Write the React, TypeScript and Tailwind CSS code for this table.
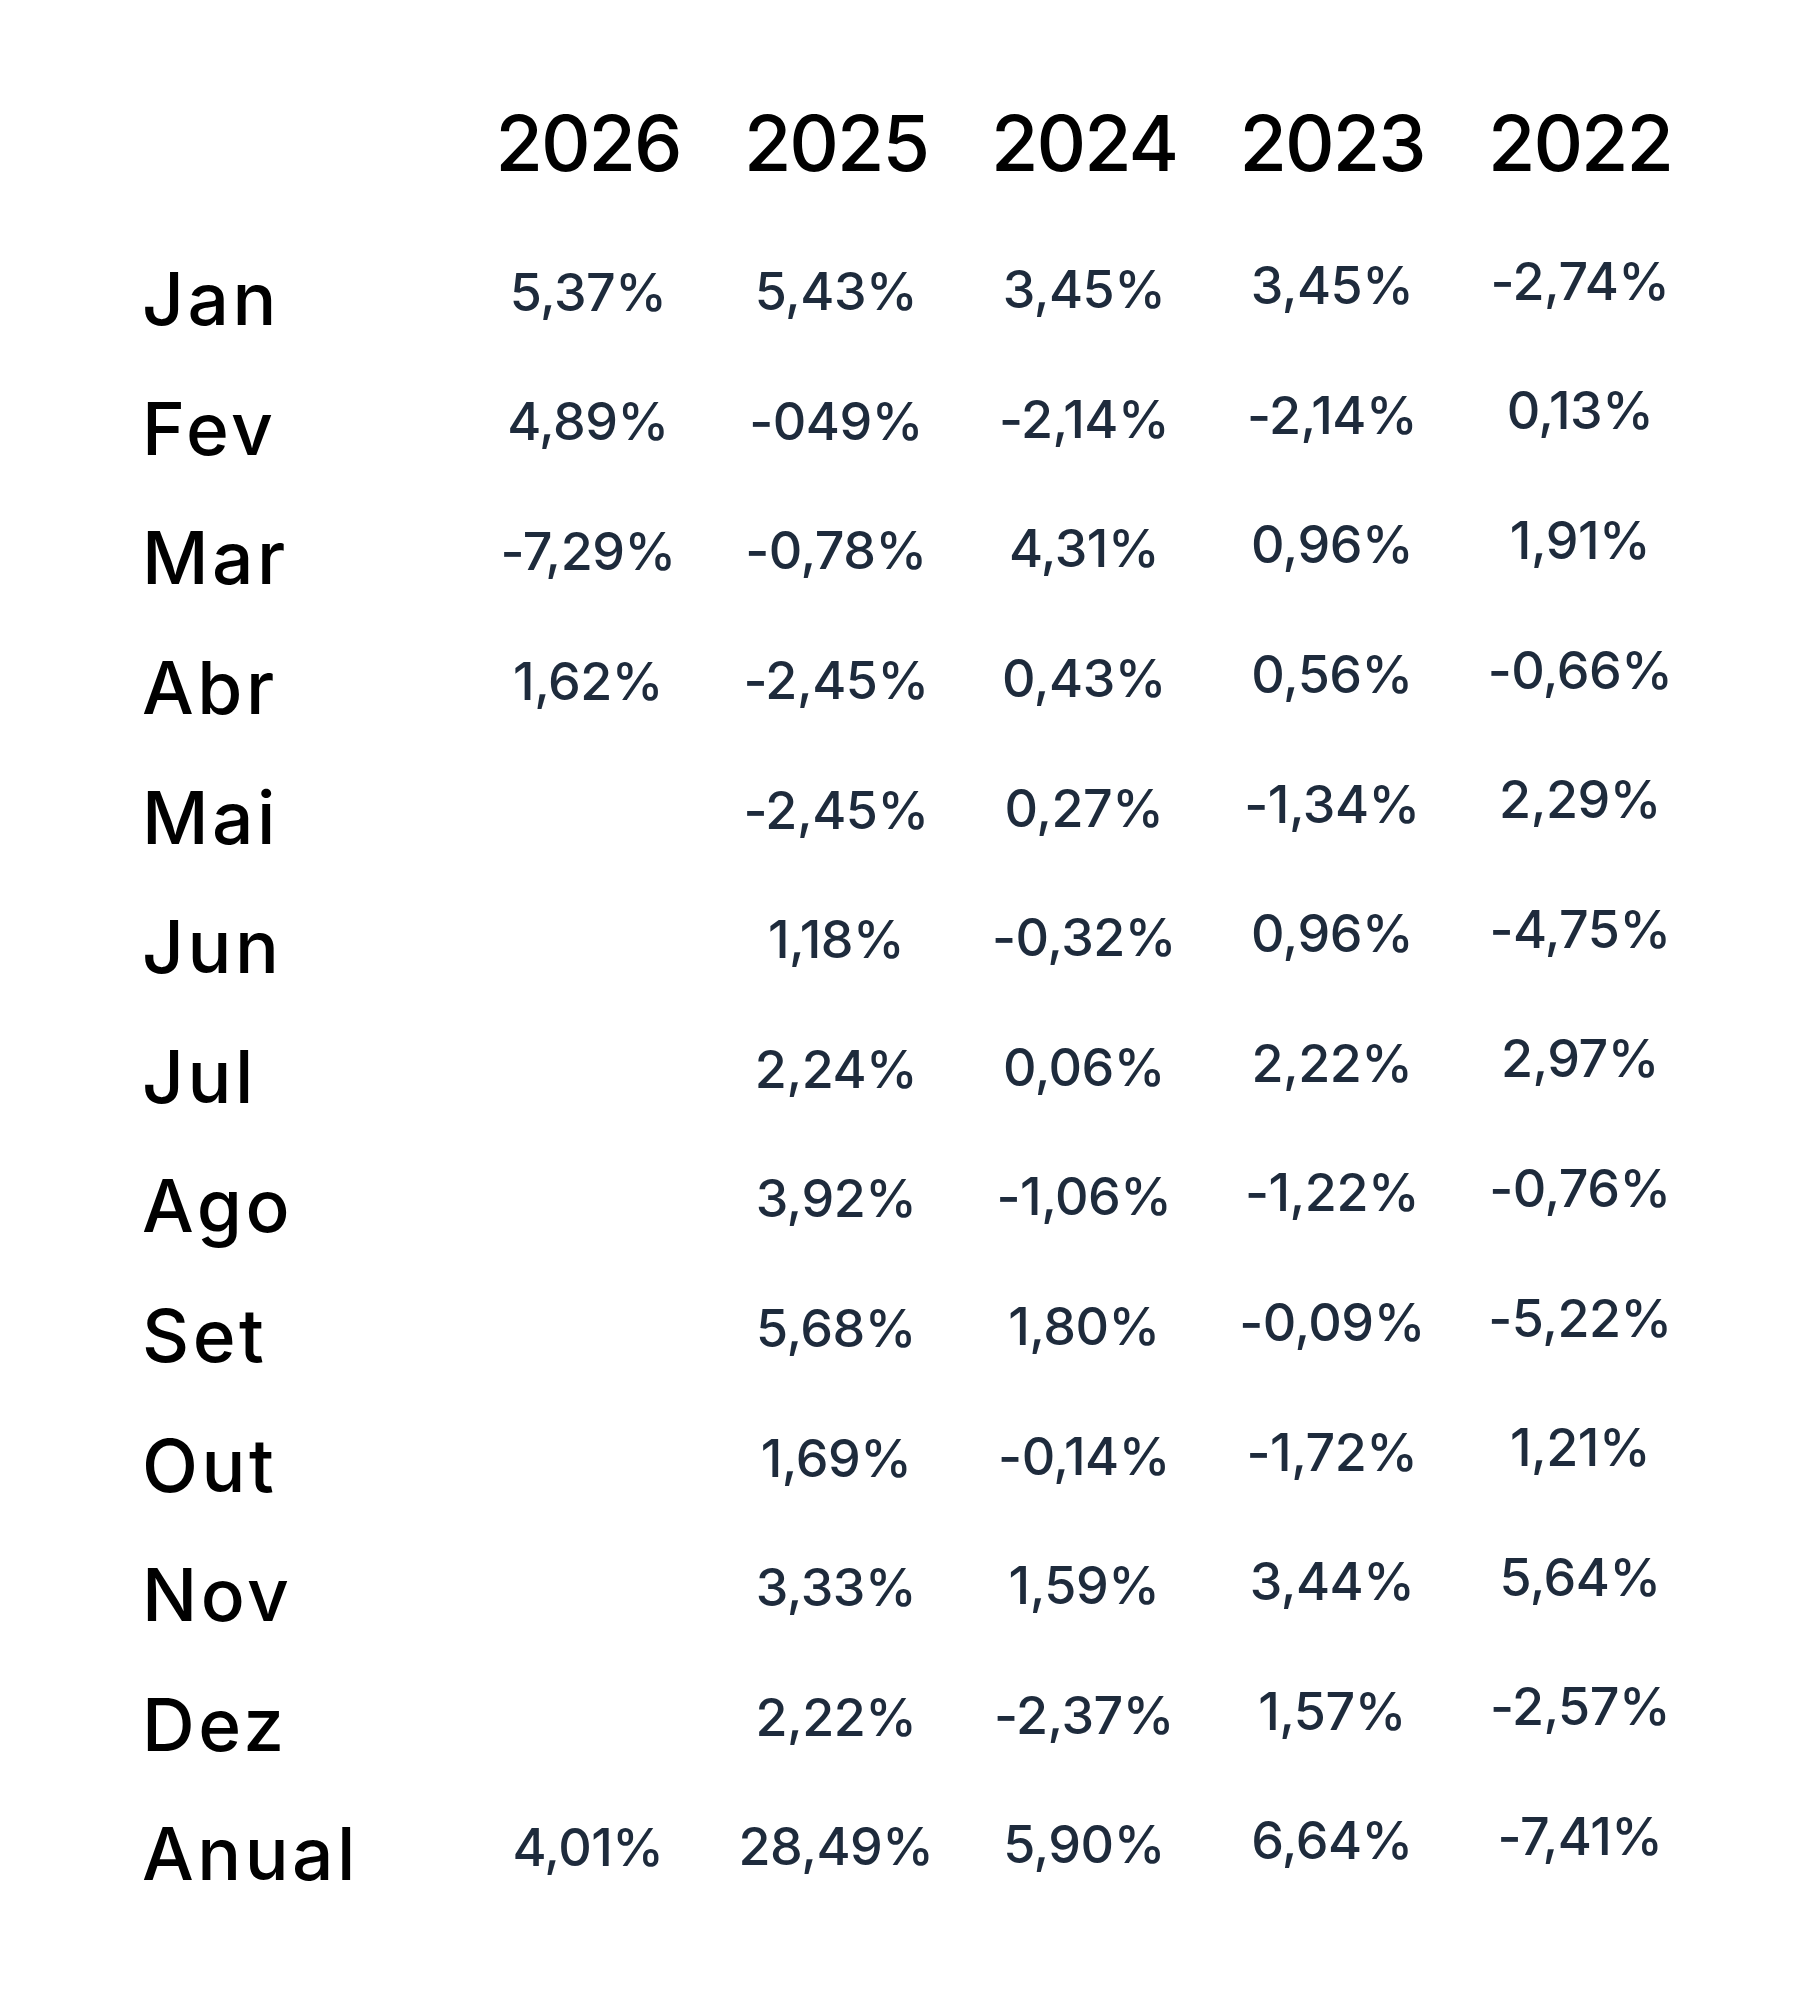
import React from "react";

const years = ["2026", "2025", "2024", "2023", "2022"];
const months = ["Jan", "Fev", "Mar", "Abr", "Mai", "Jun", "Jul", "Ago", "Set", "Out", "Nov", "Dez", "Anual"];

const data: string[][] = [
  ["5,37%", "5,43%", "3,45%", "3,45%", "-2,74%"],
  ["4,89%", "-049%", "-2,14%", "-2,14%", "0,13%"],
  ["-7,29%", "-0,78%", "4,31%", "0,96%", "1,91%"],
  ["1,62%", "-2,45%", "0,43%", "0,56%", "-0,66%"],
  ["", "-2,45%", "0,27%", "-1,34%", "2,29%"],
  ["", "1,18%", "-0,32%", "0,96%", "-4,75%"],
  ["", "2,24%", "0,06%", "2,22%", "2,97%"],
  ["", "3,92%", "-1,06%", "-1,22%", "-0,76%"],
  ["", "5,68%", "1,80%", "-0,09%", "-5,22%"],
  ["", "1,69%", "-0,14%", "-1,72%", "1,21%"],
  ["", "3,33%", "1,59%", "3,44%", "5,64%"],
  ["", "2,22%", "-2,37%", "1,57%", "-2,57%"],
  ["4,01%", "28,49%", "5,90%", "6,64%", "-7,41%"],
];

const colPad = ["pb-[12px]", "pb-[13px]", "pb-[17px]", "pb-[25px]", "pb-[34px]"];

export default function App() {
  return (
    <div
      className="w-[1801px] h-[1995px] bg-white pt-[78px] pl-[142px]"
      style={{ fontFamily: "Inter, 'Noto Sans', sans-serif" }}
    >
      <div className="grid grid-cols-[322px_repeat(5,248px)] h-[130px] items-center">
        <div />
        {years.map((y) => (
          <div key={y} className="text-center text-[77px] leading-none font-medium text-black tracking-[-2px]">
            {y}
          </div>
        ))}
      </div>
      <div className="mt-[26px] flex flex-col">
        {months.map((m, i) => (
          <div key={m} className="grid grid-cols-[322px_repeat(5,248px)] h-[129.6px] items-center">
            <div className="text-[73px] leading-none font-medium text-black tracking-[3.5px]">{m}</div>
            {data[i].map((v, j) => (
              <div
                key={j}
                className={`text-center text-[52px] leading-none font-medium text-[#1e2b3c] tracking-[-0.5px] ${colPad[j]}`}
              >
                {v}
              </div>
            ))}
          </div>
        ))}
      </div>
    </div>
  );
}
